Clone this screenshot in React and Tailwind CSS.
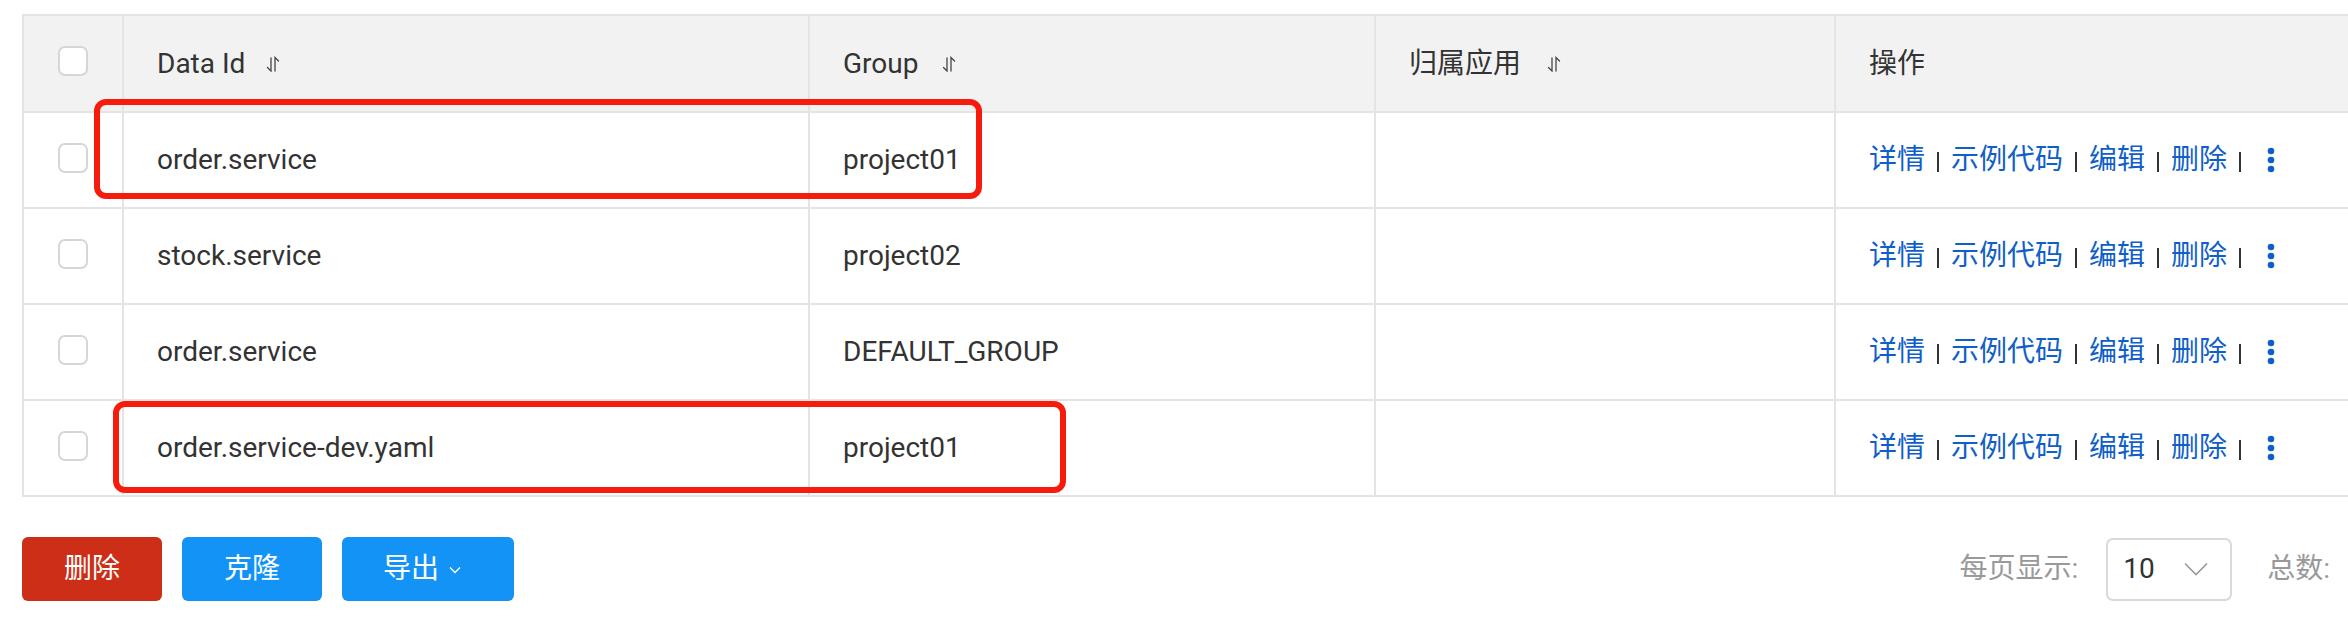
import React from 'react';

const rows = [
  { id: 'order.service', group: 'project01' },
  { id: 'stock.service', group: 'project02' },
  { id: 'order.service', group: 'DEFAULT_GROUP' },
  { id: 'order.service-dev.yaml', group: 'project01' },
];

function SortIcon() {
  return (
    <svg width="14" height="16" viewBox="0 0 14 16" fill="none" stroke="#444" strokeWidth="1.3" strokeLinecap="round">
      <path d="M5 2v13L1.5 11.5" />
      <path d="M9 15V1.5l3.5 3.5" />
    </svg>
  );
}

function Checkbox() {
  return <span className="mb-[5px] block h-[30px] w-[30px] rounded-[7px] border-2 border-[#d6d6d6] bg-white" />;
}

function Sep() {
  return <span className="mx-[12px] mt-[4px] block h-[20px] w-[2px] bg-[#333]" />;
}

function MoreIcon() {
  return (
    <svg className="ml-[14px]" width="8" height="26" viewBox="0 0 8 26" fill="#105fc8">
      <circle cx="4" cy="4" r="3.3" />
      <circle cx="4" cy="13" r="3.3" />
      <circle cx="4" cy="22" r="3.3" />
    </svg>
  );
}

function Row({ children, head }) {
  return (
    <div className={`flex border-b-2 border-[#e4e4e4] ${head ? 'h-[97px] bg-[#f2f2f2]' : 'h-[96px] bg-white'}`}>
      {children}
    </div>
  );
}

function Cell({ w, children, last }) {
  return (
    <div className={`flex items-center pl-[33px] ${last ? 'flex-1' : 'shrink-0 border-r-2 border-[#e4e4e4]'} ${w || ''}`}>
      {children}
    </div>
  );
}

export default function App() {
  return (
    <div className="relative h-[624px] w-[2348px] overflow-hidden bg-white font-[Roboto,'Noto_Sans_CJK_SC',sans-serif] text-[28px] text-[#333]">
      <div className="ml-[22px] mt-[14px] w-[2400px] border-l-2 border-t-2 border-[#e4e4e4]">
        <Row head>
          <div className="flex w-[100px] shrink-0 items-center justify-center border-r-2 border-[#e4e4e4]">
            <Checkbox />
          </div>
          <Cell w="w-[686px]">
            <span>Data Id</span>
            <span className="ml-[21px] flex"><SortIcon /></span>
          </Cell>
          <Cell w="w-[566px]">
            <span>Group</span>
            <span className="ml-[24px] flex"><SortIcon /></span>
          </Cell>
          <Cell w="w-[460px]">
            <span>归属应用</span>
            <span className="ml-[26px] flex"><SortIcon /></span>
          </Cell>
          <Cell last>
            <span>操作</span>
          </Cell>
        </Row>
        {rows.map((r, i) => (
          <Row key={i}>
            <div className="flex w-[100px] shrink-0 items-center justify-center border-r-2 border-[#e4e4e4]">
              <Checkbox />
            </div>
            <Cell w="w-[686px]">{r.id}</Cell>
            <Cell w="w-[566px]">{r.group}</Cell>
            <Cell w="w-[460px]" />
            <Cell last>
              <div className="flex items-center text-[#105fc8]">
                <span>详情</span>
                <Sep />
                <span>示例代码</span>
                <Sep />
                <span>编辑</span>
                <Sep />
                <span>删除</span>
                <Sep />
                <MoreIcon />
              </div>
            </Cell>
          </Row>
        ))}
      </div>

      <div className="ml-[22px] mt-[40px] flex w-[2326px] items-center justify-between pr-[18px]">
        <div className="flex items-center gap-[20px] text-white">
          <button className="h-[64px] w-[140px] rounded-[6px] bg-[#cc2e18]">删除</button>
          <button className="h-[64px] w-[140px] rounded-[6px] bg-[#1493f7]">克隆</button>
          <button className="flex h-[64px] w-[172px] items-center justify-center gap-[10px] rounded-[6px] bg-[#1493f7] pr-[12px]">
            <span>导出</span>
            <svg className="mt-[2px]" width="12" height="8" viewBox="0 0 12 8" fill="none" stroke="#fff" strokeWidth="1.3">
              <path d="M1 1.5l5 5 5-5" />
            </svg>
          </button>
        </div>
        <div className="flex items-center text-[#999]">
          <span>每页显示:</span>
          <div className="ml-[28px] flex h-[63px] w-[126px] items-center justify-between rounded-[7px] border-2 border-[#d9d9d9] pl-[15px] pr-[22px] text-[#333]">
            <span>10</span>
            <svg width="24" height="14" viewBox="0 0 24 14" fill="none" stroke="#999" strokeWidth="1.6">
              <path d="M1 1.5l11 11 11-11" />
            </svg>
          </div>
          <span className="ml-[35px]">总数:</span>
        </div>
      </div>

      <div className="absolute left-[94px] top-[99px] h-[100px] w-[888px] rounded-[12px] border-[6px] border-[#f71b0d]" />
      <div className="absolute left-[113px] top-[401px] h-[92px] w-[953px] rounded-[12px] border-[6px] border-[#f71b0d]" />
    </div>
  );
}
